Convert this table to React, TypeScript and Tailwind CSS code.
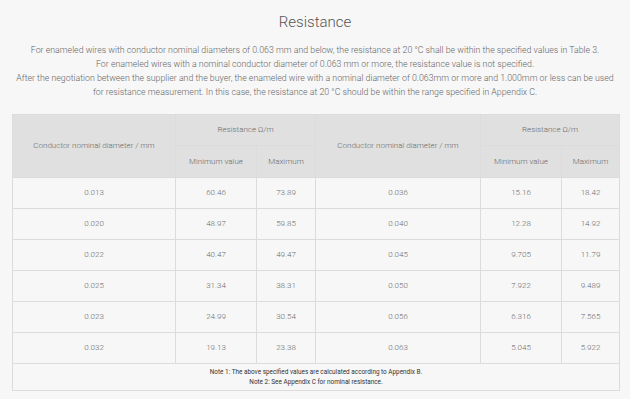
import React from "react";

const rows = [
  ["0.013", "60.46", "73.89", "0.036", "15.16", "18.42"],
  ["0.020", "48.97", "59.85", "0.040", "12.28", "14.92"],
  ["0.022", "40.47", "49.47", "0.045", "9.705", "11.79"],
  ["0.025", "31.34", "38.31", "0.050", "7.922", "9.489"],
  ["0.023", "24.99", "30.54", "0.056", "6.316", "7.565"],
  ["0.032", "19.13", "23.38", "0.063", "5.045", "5.922"],
];

export default function App() {
  const cell = "border border-[#dcdcdc] text-center align-middle font-light";
  return (
    <div
      className="w-[630px] h-[399px] bg-[#f7f7f7] text-[#666] overflow-hidden"
      style={{ fontFamily: "Roboto, 'Liberation Sans', sans-serif" }}
    >
      <h1 className="pt-[12px] text-center text-[15px] leading-[20px] font-light text-[#555]">
        Resistance
      </h1>
      <div className="mt-[11px] text-center text-[8.8px] leading-[14px] font-light text-[#666]">
        <p>For enameled wires with conductor nominal diameters of 0.063 mm and below, the resistance at 20 °C shall be within the specified values in Table 3.</p>
        <p>For enameled wires with a nominal conductor diameter of 0.063 mm or more, the resistance value is not specified.</p>
        <p>After the negotiation between the supplier and the buyer, the enameled wire with a nominal diameter of 0.063mm or more and 1.000mm or less can be used</p>
        <p>for resistance measurement. In this case, the resistance at 20 °C should be within the range specified in Appendix C.</p>
      </div>
      <table className="mt-[15px] ml-[12px] w-[607px] border-collapse table-fixed text-[8px] text-[#6a6a6a]">
        <colgroup>
          <col className="w-[163px]" />
          <col className="w-[81px]" />
          <col className="w-[59px]" />
          <col className="w-[165px]" />
          <col className="w-[81px]" />
          <col className="w-[58px]" />
        </colgroup>
        <thead className="bg-[#e0e0e0]">
          <tr className="h-[31px]">
            <th rowSpan={2} className={cell}>Conductor nominal diameter / mm</th>
            <th colSpan={2} className={cell}>Resistance Ω/m</th>
            <th rowSpan={2} className={cell}>Conductor nominal diameter / mm</th>
            <th colSpan={2} className={cell}>Resistance Ω/m</th>
          </tr>
          <tr className="h-[32px]">
            <th className={cell}>Minimum value</th>
            <th className={cell}>Maximum</th>
            <th className={cell}>Minimum value</th>
            <th className={cell}>Maximum</th>
          </tr>
        </thead>
        <tbody>
          {rows.map((r, i) => (
            <tr key={i} className="h-[31px]">
              {r.map((v, j) => (
                <td key={j} className={cell}>{v}</td>
              ))}
            </tr>
          ))}
          <tr className="h-[27px]">
            <td
              colSpan={6}
              className="border border-[#dcdcdc] text-center text-[6.4px] leading-[10px] font-normal text-[#333]"
            >
              <div>Note 1: The above specified values are calculated according to Appendix B.</div>
              <div>Note 2: See Appendix C for nominal resistance.</div>
            </td>
          </tr>
        </tbody>
      </table>
    </div>
  );
}
